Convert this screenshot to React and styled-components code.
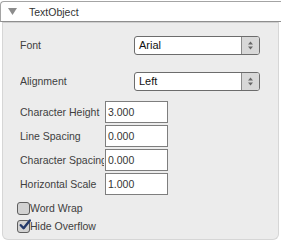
import styled, { createGlobalStyle } from "styled-components";

const GlobalStyle = createGlobalStyle`
  body {
    margin: 0;
    background: #ffffff;
    font-family: "Liberation Sans", Arial, sans-serif;
  }
`;

const Inspector = styled.div`
  width: 281px;
  height: 243px;
  display: flex;
  flex-direction: column;
`;

const Header = styled.div`
  height: 19px;
  margin-top: 1px;
  display: flex;
  align-items: center;
  gap: 12px;
  padding-left: 7px;
  background: #ffffff;
  border-top: 1px solid #a4a4a4;
  border-left: 1px solid #a4a4a4;
  border-bottom: 1px solid #8e8e8e;
  border-top-left-radius: 4px;
  font-size: 10.5px;
  color: #333333;
`;

const Panel = styled.div`
  margin: 0 2px;
  height: 218px;
  box-sizing: border-box;
  padding: 12px 0 0 17px;
  background: #ececec;
  border: 1px solid #d6d6d6;
  border-top: 1px solid #cfcfcf;
  border-radius: 0 0 6px 6px;
  display: flex;
  flex-direction: column;
`;

const SelectRow = styled.div`
  display: flex;
  align-items: center;
  height: 20px;
  margin-bottom: ${(p) => p.$gap}px;
`;

const FieldRow = styled.div`
  display: flex;
  align-items: center;
  height: 22px;
  margin-bottom: 2px;
`;

const Label = styled.div`
  width: ${(p) => p.$width}px;
  margin-right: ${(p) => p.$space || 0}px;
  flex: none;
  overflow: hidden;
  white-space: nowrap;
  font-size: 10.5px;
  color: #404040;
`;

const Select = styled.div`
  width: 126px;
  height: 19px;
  box-sizing: border-box;
  display: flex;
  border: 1px solid #6c6c6c;
  border-radius: 3px;
  background: #ffffff;
  overflow: hidden;
`;

const SelectValue = styled.div`
  flex: 1;
  padding-left: 4px;
  display: flex;
  align-items: center;
  font-size: 11px;
  color: #111111;
`;

const Stepper = styled.div`
  width: 17px;
  border-left: 1px solid #8a8a8a;
  background: #d8d8d8;
  display: flex;
  align-items: center;
  justify-content: center;
`;

const Input = styled.div`
  width: 63px;
  height: 22px;
  box-sizing: border-box;
  padding-left: 2px;
  display: flex;
  align-items: center;
  border: 1px solid #7e7e7e;
  background: #ffffff;
  font-size: 10.5px;
  color: #333333;
`;

const CheckRow = styled.div`
  display: flex;
  align-items: center;
  height: 18px;
  margin-left: -3px;
  margin-top: ${(p) => p.$top || 0}px;
  font-size: 10.5px;
  color: #404040;
`;

const Box = styled.div`
  width: 13px;
  height: 13px;
  box-sizing: border-box;
  border: 1px solid #5e5e5e;
  border-radius: 3px;
  background: #d2d2d2;
  display: flex;
  align-items: center;
  justify-content: center;
`;

function Arrows() {
  return (
    <svg width="7" height="9" viewBox="0 0 7 9">
      <path d="M3.5 0.5 L6 3.5 H1 Z" fill="#666" />
      <path d="M3.5 8.5 L6 5.5 H1 Z" fill="#666" />
    </svg>
  );
}

function Check() {
  return (
    <svg width="12" height="12" viewBox="0 0 12 12" style={{ marginTop: -2, marginRight: -2 }}>
      <path
        d="M1.8 6.2 L4.6 9.2 L10.8 1.4"
        fill="none"
        stroke="#22386a"
        strokeWidth="2.4"
        strokeLinecap="round"
        strokeLinejoin="round"
      />
    </svg>
  );
}

function Dropdown({ value }) {
  return (
    <Select>
      <SelectValue>{value}</SelectValue>
      <Stepper>
        <Arrows />
      </Stepper>
    </Select>
  );
}

const fields = [
  ["Character Height", "3.000"],
  ["Line Spacing", "0.000"],
  ["Character Spacing", "0.000"],
  ["Horizontal Scale", "1.000"],
];

export default function App() {
  return (
    <>
      <GlobalStyle />
      <Inspector>
        <Header>
          <svg width="9" height="7" viewBox="0 0 9 7">
            <path d="M0 0 H9 L4.5 7 Z" fill="#8c8c8c" />
          </svg>
          <span>TextObject</span>
        </Header>
        <Panel>
          <SelectRow $gap={16}>
            <Label $width={114}>Font</Label>
            <Dropdown value="Arial" />
          </SelectRow>
          <SelectRow $gap={10}>
            <Label $width={114}>Alignment</Label>
            <Dropdown value="Left" />
          </SelectRow>
          {fields.map(([label, value]) => (
            <FieldRow key={label}>
              <Label $width={84} $space={1}>{label}</Label>
              <Input>{value}</Input>
            </FieldRow>
          ))}
          <CheckRow $top={2}>
            <Box />
            <span>Word Wrap</span>
          </CheckRow>
          <CheckRow>
            <Box>
              <Check />
            </Box>
            <span>Hide Overflow</span>
          </CheckRow>
        </Panel>
      </Inspector>
    </>
  );
}
